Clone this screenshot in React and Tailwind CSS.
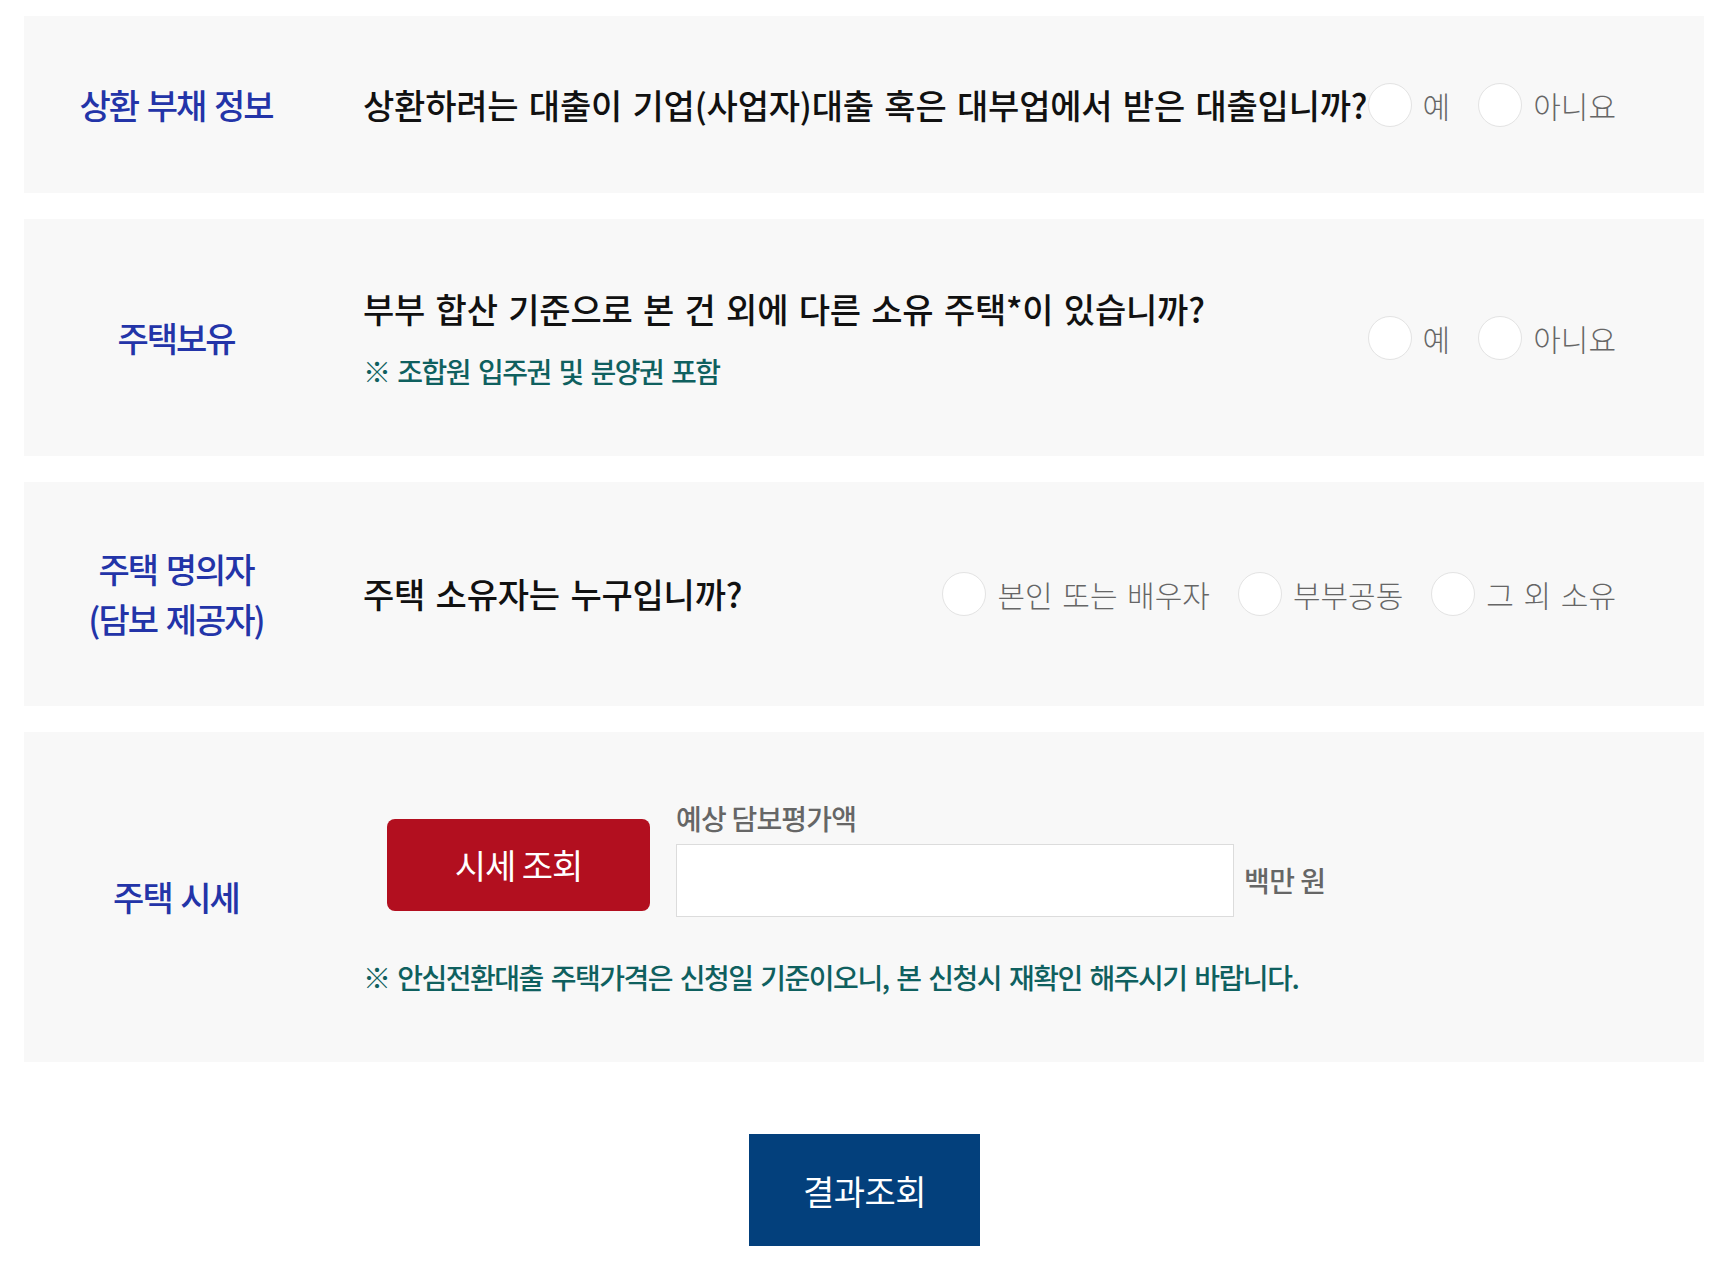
import React from 'react';

const font = { fontFamily: '"Noto Sans CJK KR", "Noto Sans", sans-serif' };

function Radio({ label }) {
  return (
    <label className="flex items-center cursor-pointer">
      <span className="w-[44px] h-[44px] rounded-full bg-white border border-[#e3e3e3] shrink-0" />
      <span className="ml-[11px] text-[30px] leading-[44px] [word-spacing:3px] text-[#666] font-light whitespace-nowrap">
        {label}
      </span>
    </label>
  );
}

function RadioGroup({ options }) {
  return (
    <div className="flex items-center gap-[28px] shrink-0">
      {options.map((o) => (
        <Radio key={o} label={o} />
      ))}
    </div>
  );
}

function Row({ height, label, children }) {
  return (
    <div className={`flex items-center bg-[#f8f8f8] ${height}`}>
      <div className="w-[304px] shrink-0 text-center text-[34px] leading-[50px] tracking-[-2px] [word-spacing:3px] font-medium text-[#2334a8]">
        {label}
      </div>
      <div className="flex-1 pl-[35px] pr-[88px] flex items-center justify-between">{children}</div>
    </div>
  );
}

const question = 'text-[34px] leading-[44px] tracking-[-0.2px] [word-spacing:3px] font-medium text-[#111] whitespace-nowrap';
const note = 'text-[28px] leading-[36px] tracking-[-1.5px] [word-spacing:3px] font-medium text-[#0f605f] whitespace-nowrap';

export default function App() {
  return (
    <div className="min-h-screen bg-white pt-[16px] pb-[18px]" style={font}>
      <div className="ml-[24px] w-[1680px] flex flex-col gap-[26px]">
        {/* 상환 부채 정보 */}
        <Row height="h-[177px]" label="상환 부채 정보">
          <p className={question}>상환하려는 대출이 기업(사업자)대출 혹은 대부업에서 받은 대출입니까?</p>
          <RadioGroup options={['예', '아니요']} />
        </Row>

        {/* 주택보유 */}
        <Row height="h-[237px]" label="주택보유">
          <div>
            <p className={question}>부부 합산 기준으로 본 건 외에 다른 소유 주택*이 있습니까?</p>
            <p className={`${note} mt-[22px]`}>※ 조합원 입주권 및 분양권 포함</p>
          </div>
          <RadioGroup options={['예', '아니요']} />
        </Row>

        {/* 주택 명의자 */}
        <Row
          height="h-[224px]"
          label={
            <>
              주택 명의자
              <br />
              (담보 제공자)
            </>
          }
        >
          <p className={question}>주택 소유자는 누구입니까?</p>
          <RadioGroup options={['본인 또는 배우자', '부부공동', '그 외 소유']} />
        </Row>

        {/* 주택 시세 */}
        <Row height="h-[330px]" label="주택 시세">
          <div>
            <div className="flex items-end">
              <button className="ml-[24px] mb-[6px] w-[263px] h-[92px] rounded-[8px] bg-[#b20f1f] text-white text-[34px] tracking-[-1px]">
                시세 조회
              </button>
              <div className="ml-[26px]">
                <p className="text-[28px] leading-[36px] tracking-[-0.8px] font-medium text-[#666]">예상 담보평가액</p>
                <div className="mt-[8px] flex items-center">
                  <input className="w-[558px] h-[73px] bg-white border border-[#dcdcdc] outline-none px-4 text-[26px]" />
                  <span className="ml-[10px] text-[28px] tracking-[-0.5px] font-medium text-[#666]">백만 원</span>
                </div>
              </div>
            </div>
            <p className={`${note} mt-[42px]`}>
              ※ 안심전환대출 주택가격은 신청일 기준이오니, 본 신청시 재확인 해주시기 바랍니다.
            </p>
          </div>
        </Row>
      </div>

      <div className="mt-[72px] flex justify-center">
        <button className="ml-[6px] w-[231px] h-[112px] bg-[#03407c] text-white text-[34px] tracking-[-0.5px]">결과조회</button>
      </div>
    </div>
  );
}
